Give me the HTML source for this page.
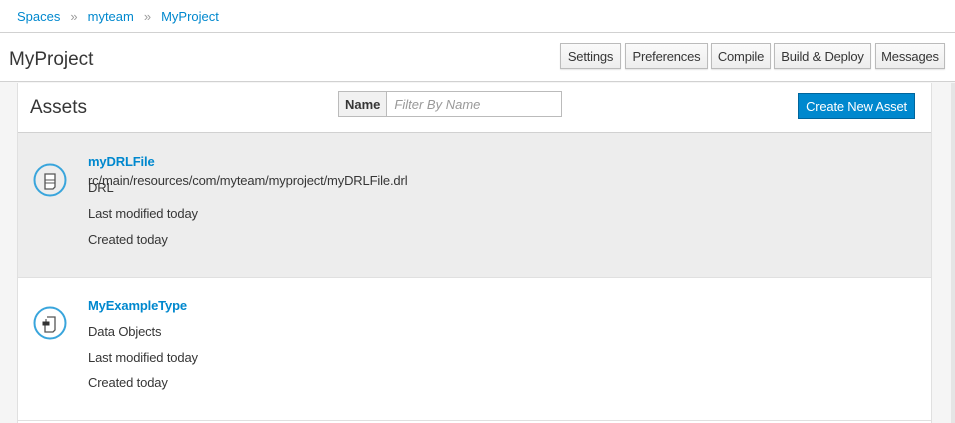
<!DOCTYPE html>
<html><head><style>
*{box-sizing:border-box;margin:0;padding:0}
body{width:955px;height:423px;overflow:hidden;font-family:"Liberation Sans",sans-serif;background:#f5f5f5;position:relative;color:#363636}
.bc{position:absolute;left:0;top:0;width:955px;height:33px;background:#fff;border-bottom:1px solid #d1d1d1;font-size:13px;padding:9px 0 0 17px;color:#0088ce}
.bc span.s{color:#9c9c9c;margin:0 10px}
.hd{position:absolute;left:0;top:33px;width:955px;height:49px;background:#fff;border-bottom:1px solid #d1d1d1}
.hd h1{position:absolute;left:9px;top:16px;font-size:19px;font-weight:normal;color:#363636}
.btn{position:absolute;top:10px;height:26px;border:1px solid #bbb;background:linear-gradient(#fafafa,#ededed);font-size:13px;padding:5px 0 0;text-align:center;color:#363636;box-shadow:0 1px 1px rgba(0,0,0,.1);letter-spacing:-0.2px}
.scroll{position:absolute;right:0;top:83px;width:4px;height:340px;background:#e5e5e5}
.panel{position:absolute;left:17px;top:83px;width:915px;height:340px;background:#fff;border-left:1px solid #e0e0e0;border-right:1px solid #e0e0e0}
.ph{height:50px;border-bottom:1px solid #d1d1d1;position:relative}
.ph h2{position:absolute;left:12px;top:14px;font-size:19px;font-weight:normal}
.filt{position:absolute;left:320px;top:8px;display:flex;height:26px}
.filt .l{border:1px solid #bbb;background:#f1f1f1;font-size:13px;font-weight:bold;padding:5px 6px 0}
.filt .i{border:1px solid #bbb;border-left:none;width:175px;font-size:13px;font-style:italic;color:#999;padding:5px 7px 0}
.cna{position:absolute;right:16px;top:10px;width:117px;height:26px;background:#0088ce;border:1px solid #00659c;color:#fff;font-size:13px;padding:5px 0 0;text-align:center;letter-spacing:-0.2px}
.row{position:relative;height:145px;border-bottom:1px solid #e0e0e0}
.row.g{background:#ededed}
.row svg{position:absolute;left:15px;top:30px}
.t{position:absolute;left:70px;font-size:13px;letter-spacing:-0.15px}
.nm{color:#0088ce;font-weight:bold}
</style></head><body>
<div class="bc">Spaces<span class="s">»</span>myteam<span class="s">»</span>MyProject</div>
<div class="hd"><h1>MyProject</h1>
<div class="btn" style="left:560px;width:61px">Settings</div>
<div class="btn" style="left:625px;width:83px">Preferences</div>
<div class="btn" style="left:711px;width:60px">Compile</div>
<div class="btn" style="left:774px;width:97px">Build &amp; Deploy</div>
<div class="btn" style="left:875px;width:70px">Messages</div>
</div>
<div class="scroll"></div>
<div class="panel">
<div class="ph"><h2>Assets</h2><div class="filt"><div class="l">Name</div><div class="i">Filter By Name</div></div><div class="cna">Create New Asset</div></div>
<div class="row g">
<svg width="36" height="36" viewBox="0 0 36 36"><circle cx="17" cy="17" r="15.5" fill="none" stroke="#39a5dc" stroke-width="2"/><path d="M12 11h10v13l-2 2h-8z" fill="#fff" stroke="#555" stroke-width="1.3"/><path d="M12 17h10M12 20h10" stroke="#555"/></svg>
<div class="t nm" style="top:21px">myDRLFile</div>
<div class="t" style="top:40px">rc/main/resources/com/myteam/myproject/myDRLFile.drl</div>
<div class="t" style="top:47px">DRL</div>
<div class="t" style="top:73px">Last modified today</div>
<div class="t" style="top:99px">Created today</div>
</div>
<div class="row" style="height:143px">
<svg width="36" height="36" viewBox="0 0 36 36" style="top:28px"><circle cx="17" cy="17" r="15.5" fill="none" stroke="#39a5dc" stroke-width="2"/><path d="M14 11h8v13l-2 2h-8v-7" fill="#fff" stroke="#555" stroke-width="1.3"/><path d="M10 16h6v3h-6z M13 13v3" fill="#333" stroke="#333"/></svg>
<div class="t nm" style="top:20px">MyExampleType</div>
<div class="t" style="top:46px">Data Objects</div>
<div class="t" style="top:72px">Last modified today</div>
<div class="t" style="top:97px">Created today</div>
</div>
</div>
</body></html>
